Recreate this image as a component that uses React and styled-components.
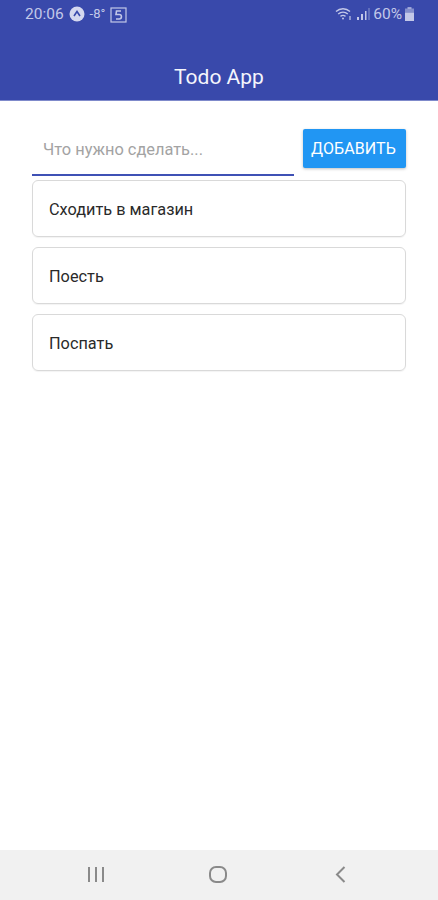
import styled, { createGlobalStyle } from "styled-components";

const GlobalStyle = createGlobalStyle`
  html, body {
    margin: 0;
    padding: 0;
    background: #ffffff;
  }
  * {
    box-sizing: border-box;
  }
`;

const Screen = styled.div`
  width: 438px;
  height: 900px;
  display: flex;
  flex-direction: column;
  font-family: Roboto, "Noto Sans", sans-serif;
  overflow: hidden;
`;

const Header = styled.header`
  height: 101px;
  background: #3949ab;
  border-bottom: 1px solid #7f8acb;
  display: flex;
  flex-direction: column;
  flex-shrink: 0;
`;

const StatusBar = styled.div`
  height: 28px;
  padding: 0 24px 0 25px;
  display: flex;
  align-items: center;
  justify-content: space-between;
  color: #c3c8e8;
`;

const StatusGroup = styled.div`
  display: flex;
  align-items: center;
  gap: ${(p) => p.$gap || 4}px;
`;

const StatusText = styled.span`
  font-size: ${(p) => p.$size || 15.5}px;
  line-height: 16px;
`;

const Title = styled.h1`
  margin: 0;
  padding-top: 35px;
  text-align: center;
  color: #f4f5fc;
  font-size: 21px;
  line-height: 28px;
  font-weight: 400;
`;

const Content = styled.main`
  flex: 1;
  padding: 28px 32px 0;
  display: flex;
  flex-direction: column;
  gap: 10px;
`;

const AddRow = styled.div`
  display: flex;
  align-items: flex-start;
  justify-content: space-between;
  height: 47px;
  margin-bottom: -6px;
`;

const TaskField = styled.div`
  width: 262px;
  height: 47px;
  padding: 0 11px 4px;
  display: flex;
  align-items: center;
  border-bottom: 2px solid #3f51b5;
  color: #a3a3a3;
  font-size: 16.4px;
`;

const AddButton = styled.button`
  width: 103px;
  height: 39px;
  padding: 0 2px 0 0;
  border: 0;
  border-radius: 2px;
  background: #2196f3;
  color: #ffffff;
  font-family: inherit;
  font-size: 16px;
  letter-spacing: 0.1px;
  box-shadow: 0 1px 3px rgba(0, 0, 0, 0.25);
`;

const TaskCard = styled.div`
  height: 57px;
  padding: 1px 16px 0;
  display: flex;
  align-items: center;
  border: 1px solid #d9d9d9;
  border-radius: 6px;
  box-shadow: 0 1px 1px rgba(0, 0, 0, 0.05);
  color: #2a2a2a;
  font-size: 16.3px;
`;

const NavBar = styled.nav`
  height: 50px;
  flex-shrink: 0;
  background: #f1f1f1;
  display: flex;
  align-items: center;
  justify-content: center;
  gap: 98px;
  padding: 0 2px 3px 0;
`;

const NavIcon = styled.svg`
  width: 24px;
  height: 24px;
  fill: none;
  stroke: #8a8a8a;
  stroke-width: 2;
`;

const tasks = ["Сходить в магазин", "Поесть", "Поспать"];

export default function App() {
  return (
    <Screen>
      <GlobalStyle />
      <Header>
        <StatusBar>
          <StatusGroup $gap={5}>
            <StatusText>20:06</StatusText>
            <svg width="16" height="16" viewBox="0 0 16 16">
              <circle cx="8" cy="8" r="7.5" fill="#d5d8ef" />
              <path d="M5 10l3-4.5L11 10" fill="none" stroke="#3949ab" strokeWidth="1.6" />
            </svg>
            <StatusText $size={13}>-8°</StatusText>
            <svg width="17" height="17" viewBox="0 0 17 17" fill="none" stroke="#c3c8e8">
              <rect x="1" y="2" width="15" height="14" strokeWidth="1.2" />
              <path d="M11 5H6.5L6 8.5h3.2a2 2 0 010 4.5H6" strokeWidth="1.6" />
            </svg>
          </StatusGroup>
          <StatusGroup $gap={3}>
            <svg width="18" height="14" viewBox="0 0 18 14" fill="none" stroke="#c3c8e8" strokeWidth="1.4">
              <path d="M1 4.5c4-3.6 10-3.6 14 0M3.2 7c2.8-2.4 6.8-2.4 9.6 0M5.5 9.4c1.5-1.2 3.5-1.2 5 0" />
              <circle cx="8" cy="11.5" r="1" fill="#c3c8e8" stroke="none" />
              <path d="M15 9v4" strokeWidth="1.2" />
            </svg>
            <svg width="14" height="12" viewBox="0 0 14 12" fill="#c3c8e8">
              <rect x="1" y="9" width="2" height="3" />
              <rect x="5" y="6" width="2" height="6" />
              <rect x="9" y="3" width="1.5" height="9" />
              <rect x="12.5" y="0" width="1" height="12" opacity="0.6" />
            </svg>
            <StatusText>60%</StatusText>
            <svg width="9" height="14" viewBox="0 0 9 14" fill="#c3c8e8">
              <rect x="2.5" y="0" width="4" height="2" opacity="0.7" />
              <rect x="0" y="1.5" width="9" height="4" opacity="0.55" />
              <rect x="0" y="5.5" width="9" height="8.5" />
            </svg>
          </StatusGroup>
        </StatusBar>
        <Title>Todo App</Title>
      </Header>
      <Content>
        <AddRow>
          <TaskField>Что нужно сделать...</TaskField>
          <AddButton>ДОБАВИТЬ</AddButton>
        </AddRow>
        {tasks.map((task) => (
          <TaskCard key={task}>{task}</TaskCard>
        ))}
      </Content>
      <NavBar>
        <NavIcon viewBox="0 0 24 24">
          <path d="M5 5v15M12 5v15M19 5v15" />
        </NavIcon>
        <NavIcon viewBox="0 0 24 24">
          <rect x="4" y="5" width="16" height="15" rx="6" />
        </NavIcon>
        <NavIcon viewBox="0 0 24 24">
          <path d="M16.5 5l-7.5 7.5 7.5 7.5" />
        </NavIcon>
      </NavBar>
    </Screen>
  );
}
